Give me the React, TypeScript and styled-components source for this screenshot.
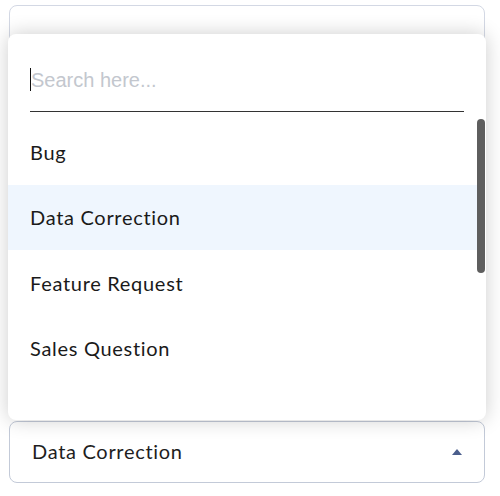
import React from "react";
import styled, { createGlobalStyle } from "styled-components";

const GlobalStyle = createGlobalStyle`
  html, body { margin: 0; padding: 0; background: #ffffff; }
  body { font-family: "Lato", "Noto Sans", sans-serif; }
  * { box-sizing: border-box; }
`;

const Page = styled.div`
  width: 500px;
  height: 496px;
  padding: 5px 15px 0 9px;
  display: flex;
  flex-direction: column;
  gap: 356px;
`;

const Field = styled.div`
  height: 60px;
  border: 1px solid #d3d8e4;
  border-radius: 8px;
  background: #ffffff;
`;

const SelectWrap = styled.div`
  position: relative;
`;

const SelectBox = styled.div`
  height: 62px;
  border: 1px solid #c3cad8;
  border-radius: 8px;
  background: #ffffff;
  padding: 0 22px 3px 22px;
  display: flex;
  align-items: center;
  justify-content: space-between;
  font-family: "Lato", sans-serif;
  font-size: 20px;
  letter-spacing: 0.7px;
  color: #1e1e1e;
`;

const Caret = styled.svg`
  width: 10px;
  height: 6px;
  display: block;
  margin-top: 2px;
`;

const Popup = styled.div`
  position: absolute;
  left: -1px;
  right: -1px;
  bottom: calc(100% + 1px);
  height: 386px;
  background: #ffffff;
  border-radius: 8px;
  box-shadow: 0 0 20px rgba(0, 0, 0, 0.2);
  overflow: hidden;
  display: flex;
  flex-direction: column;
  z-index: 2;
`;

const SearchArea = styled.div`
  padding: 27px 22px 0 22px;
  margin-bottom: 7px;
`;

const SearchField = styled.div`
  position: relative;
  &::before {
    content: "";
    position: absolute;
    left: 0;
    top: 7px;
    width: 1px;
    height: 23px;
    background: #111111;
  }
`;

const SearchInput = styled.input`
  display: block;
  width: 100%;
  height: 51px;
  padding: 0 0 11px 1px;
  border: none;
  border-bottom: 1px solid #333333;
  outline: none;
  font-family: "Liberation Sans", Arial, sans-serif;
  font-size: 20px;
  color: #222222;
  background: transparent;
  caret-color: transparent;
  &::placeholder {
    color: #c3c7ce;
  }
`;

const ListRow = styled.div`
  display: flex;
  height: 266px;
`;

const List = styled.ul`
  list-style: none;
  margin: 0;
  padding: 0;
  flex: 1;
  overflow: hidden;
`;

const Item = styled.li<{ $active?: boolean }>`
  height: 65.5px;
  display: flex;
  align-items: center;
  padding: 0 22px 0;
  font-family: "Lato", sans-serif;
  font-size: 20px;
  letter-spacing: 0.7px;
  color: #1a1a1a;
  background: ${(p) => (p.$active ? "#eff6fe" : "#ffffff")};
`;

const ScrollTrack = styled.div`
  width: 9px;
  padding-right: 1px;
  background: #ffffff;
`;

const ScrollThumb = styled.div`
  width: 8px;
  background: #5e5e5e;
  border-radius: 4px;
`;

const options = [
  "Bug",
  "Data Correction",
  "Feature Request",
  "Sales Question",
  "Technical Support",
  "Billing",
  "Other",
];

const ITEM_H = 65.5;
const VIEW_H = 266;

export default function App() {
  const selected = "Data Correction";
  const thumbH = (VIEW_H * VIEW_H) / (options.length * ITEM_H);
  return (
    <>
      <GlobalStyle />
      <Page>
        <Field />
        <SelectWrap>
          <Popup>
            <SearchArea>
              <SearchField>
                <SearchInput placeholder="Search here..." />
              </SearchField>
            </SearchArea>
            <ListRow>
              <List>
                {options.map((o) => (
                  <Item key={o} $active={o === selected}>
                    {o}
                  </Item>
                ))}
              </List>
              <ScrollTrack>
                <ScrollThumb style={{ height: `${thumbH}px` }} />
              </ScrollTrack>
            </ListRow>
          </Popup>
          <SelectBox>
            <span>{selected}</span>
            <Caret viewBox="0 0 10 6">
              <path d="M0 6 L5 0 L10 6 Z" fill="#4b5e8c" />
            </Caret>
          </SelectBox>
        </SelectWrap>
      </Page>
    </>
  );
}
